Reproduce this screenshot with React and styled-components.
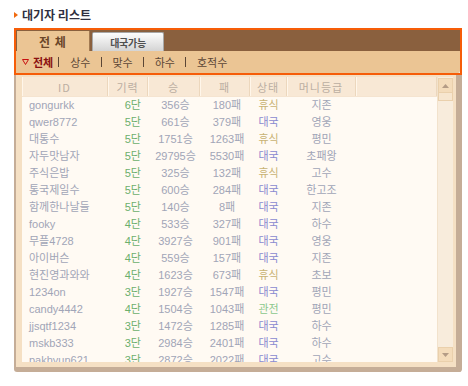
import React from "react";
import styled, { createGlobalStyle } from "styled-components";

const GlobalStyle = createGlobalStyle`
  html, body {
    margin: 0;
    padding: 0;
    background: #fff;
  }
  body {
    font-family: "Liberation Sans", "Noto Sans CJK KR", sans-serif;
    font-size: 11px;
  }
`;

const Page = styled.div`
  width: 468px;
  height: 386px;
  padding: 8px 0 0 14px;
  box-sizing: border-box;
`;

const Title = styled.h3`
  margin: 0 0 6px;
  height: 14px;
  display: flex;
  align-items: center;
  gap: 4px;
  font: bold 12px/14px "Noto Sans CJK KR", sans-serif;
  color: #2f2f40;
`;

const TabBox = styled.div`
  width: 448px;
  border: 2px solid #f65d08;
  box-sizing: border-box;
`;

const TabRow = styled.div`
  height: 21px;
  background: #8a603e;
  display: flex;
  align-items: flex-end;
  gap: 2px;
  padding-left: 1px;
`;

const Tab = styled.div`
  display: flex;
  align-items: center;
  justify-content: center;
  box-sizing: border-box;
  font-family: "Noto Sans CJK KR", sans-serif;
  ${({ $active }) =>
    $active
      ? `
    width: 73px;
    height: 20px;
    background: #ebc594;
    border-right: 1px solid #a27a52;
    color: #6a4628;
    font-size: 12px;
    font-weight: bold;
    letter-spacing: 1px;
  `
      : `
    width: 72px;
    height: 19px;
    background: linear-gradient(#fdfdfd, #d4d4d4);
    border: 1px solid #a8a8a8;
    border-bottom: none;
    border-radius: 2px 2px 0 0;
    color: #505050;
    font-size: 10px;
    font-weight: bold;
    letter-spacing: -0.3px;
  `}
`;

const FilterBar = styled.div`
  height: 22px;
  background: #ebc594;
  display: flex;
  align-items: center;
  padding-left: 6px;
  font: 11px "Noto Sans CJK KR", sans-serif;
  color: #5b4636;
  border-radius: 0 0 2px 0;
`;

const Filter = styled.span`
  font-weight: ${({ $active }) => ($active ? "bold" : "normal")};
  color: ${({ $active }) => ($active ? "#8a1010" : "#5b4636")};
`;

const Sep = styled.span`
  width: 1px;
  height: 10px;
  background: #5b4636;
  margin: 0 11px 0 ${({ $first }) => ($first ? "5px" : "10px")};
`;

const ListFrame = styled.div`
  width: 448px;
  height: 297px;
  box-sizing: border-box;
  background: #f5e0c4;
  border-left: 2px solid #c5ad97;
  border-right: 6px solid #c5ad97;
  border-bottom: 5px solid #c5ad97;
  border-radius: 0 0 3px 3px;
  padding: 2px 3px 5px 6px;
`;

const ListBox = styled.div`
  height: 285px;
  display: flex;
  background: #fffaf3;
  overflow: hidden;
`;

const Table = styled.div`
  flex: 1;
  overflow: hidden;
`;

const cols = "86px 40px 52px 50px 37px 69px 1fr";

const HeadRow = styled.div`
  display: grid;
  grid-template-columns: ${cols};
  height: 20px;
  background: #f8e8d5;
  border-bottom: 1px solid #f5e4d0;
  box-sizing: border-box;
`;

const HeadCell = styled.div`
  display: flex;
  align-items: center;
  justify-content: center;
  font: 11px "Noto Sans CJK KR", sans-serif;
  letter-spacing: 1px;
  color: #bbaea2;
  border-right: 1px solid #ecd7bd;
  box-shadow: inset 1px 0 0 #fff6ea;
`;

const Row = styled.div`
  display: grid;
  grid-template-columns: ${cols};
  height: 17px;
  line-height: 17px;
  color: #a1a5b7;
`;

const Cell = styled.div`
  white-space: nowrap;
  text-align: ${({ $align }) => $align || "center"};
  padding: ${({ $pad }) => $pad || "0"};
  color: ${({ $color }) => $color || "inherit"};
`;

const Scrollbar = styled.div`
  width: 16px;
  background: #f8ecdc;
  border-left: 1px solid #f2e2cc;
  box-sizing: border-box;
  display: flex;
  flex-direction: column;
  padding-top: 1px;
`;

const ArrowButton = styled.div`
  height: 15px;
  width: 15px;
  box-sizing: border-box;
  background: #f4dcbb;
  border: 1px solid #ead0ac;
  display: flex;
  align-items: center;
  justify-content: center;
`;

const Thumb = styled.div`
  height: 8px;
  width: 15px;
  box-sizing: border-box;
  background: #f7e6cf;
  border: 1px solid #ead0ac;
  border-top: none;
`;

const Spacer = styled.div`
  flex: 1;
`;

const statusColor = {
  휴식: "#c8b274",
  대국: "#8a8ad0",
  관전: "#8cc88c",
};

const players = [
  ["gongurkk", "6단", "356승", "180패", "휴식", "지존"],
  ["qwer8772", "5단", "661승", "379패", "대국", "영웅"],
  ["대통수", "5단", "1751승", "1263패", "휴식", "평민"],
  ["자두맛남자", "5단", "29795승", "5530패", "대국", "초패왕"],
  ["주식은밥", "5단", "325승", "132패", "휴식", "고수"],
  ["통국제일수", "5단", "600승", "284패", "대국", "한고조"],
  ["함께한나날들", "5단", "140승", "8패", "대국", "지존"],
  ["fooky", "4단", "533승", "327패", "대국", "하수"],
  ["무플4728", "4단", "3927승", "901패", "대국", "영웅"],
  ["아이버슨", "4단", "559승", "157패", "대국", "지존"],
  ["현진영과와와", "4단", "1623승", "673패", "휴식", "초보"],
  ["1234on", "3단", "1927승", "1547패", "대국", "평민"],
  ["candy4442", "4단", "1504승", "1043패", "관전", "평민"],
  ["jjsqtf1234", "3단", "1472승", "1285패", "대국", "하수"],
  ["mskb333", "3단", "2984승", "2401패", "대국", "하수"],
  ["pakhyun621", "3단", "2872승", "2022패", "대국", "고수"],
];

const Bullet = () => (
  <svg width="4" height="6" viewBox="0 0 4 6">
    <path d="M0 0 L4 3 L0 6 Z" fill="#f06a10" />
  </svg>
);

const DownMark = () => (
  <svg width="7" height="6" viewBox="0 0 7 6" style={{ marginRight: 4 }}>
    <path d="M0.5 0.5 H6.5 L3.5 5.5 Z" fill="none" stroke="#c81010" strokeWidth="1" />
  </svg>
);

const Arrow = ({ up }) => (
  <svg width="7" height="4" viewBox="0 0 7 4">
    <path d={up ? "M0 4 L3.5 0 L7 4 Z" : "M0 0 L7 0 L3.5 4 Z"} fill="#b49c86" />
  </svg>
);

const filters = ["상수", "맞수", "하수", "호적수"];

const App = () => (
  <>
    <GlobalStyle />
    <Page>
      <Title>
        <Bullet />
        대기자 리스트
      </Title>
      <TabBox>
        <TabRow>
          <Tab $active>전 체</Tab>
          <Tab>대국가능</Tab>
        </TabRow>
        <FilterBar>
          <DownMark />
          <Filter $active>전체</Filter>
          {filters.map((f, i) => (
            <React.Fragment key={f}>
              <Sep $first={i === 0} />
              <Filter>{f}</Filter>
            </React.Fragment>
          ))}
        </FilterBar>
      </TabBox>
      <ListFrame>
        <ListBox>
          <Table>
            <HeadRow>
              <HeadCell>ID</HeadCell>
              <HeadCell>기력</HeadCell>
              <HeadCell>승</HeadCell>
              <HeadCell>패</HeadCell>
              <HeadCell>상태</HeadCell>
              <HeadCell>머니등급</HeadCell>
              <HeadCell />
            </HeadRow>
            {players.map(([id, level, win, lose, status, grade]) => (
              <Row key={id}>
                <Cell $align="left" $pad="0 0 0 7px">
                  {id}
                </Cell>
                <Cell $align="right" $pad="0 7px 0 0" $color="#6caf6c">
                  {level}
                </Cell>
                <Cell $pad="0 0 0 3px">{win}</Cell>
                <Cell $pad="0 0 0 4px">{lose}</Cell>
                <Cell $color={statusColor[status]}>{status}</Cell>
                <Cell>{grade}</Cell>
                <Cell />
              </Row>
            ))}
          </Table>
          <Scrollbar>
            <ArrowButton>
              <Arrow up />
            </ArrowButton>
            <Thumb />
            <Spacer />
            <ArrowButton>
              <Arrow />
            </ArrowButton>
          </Scrollbar>
        </ListBox>
      </ListFrame>
    </Page>
  </>
);

export default App;
